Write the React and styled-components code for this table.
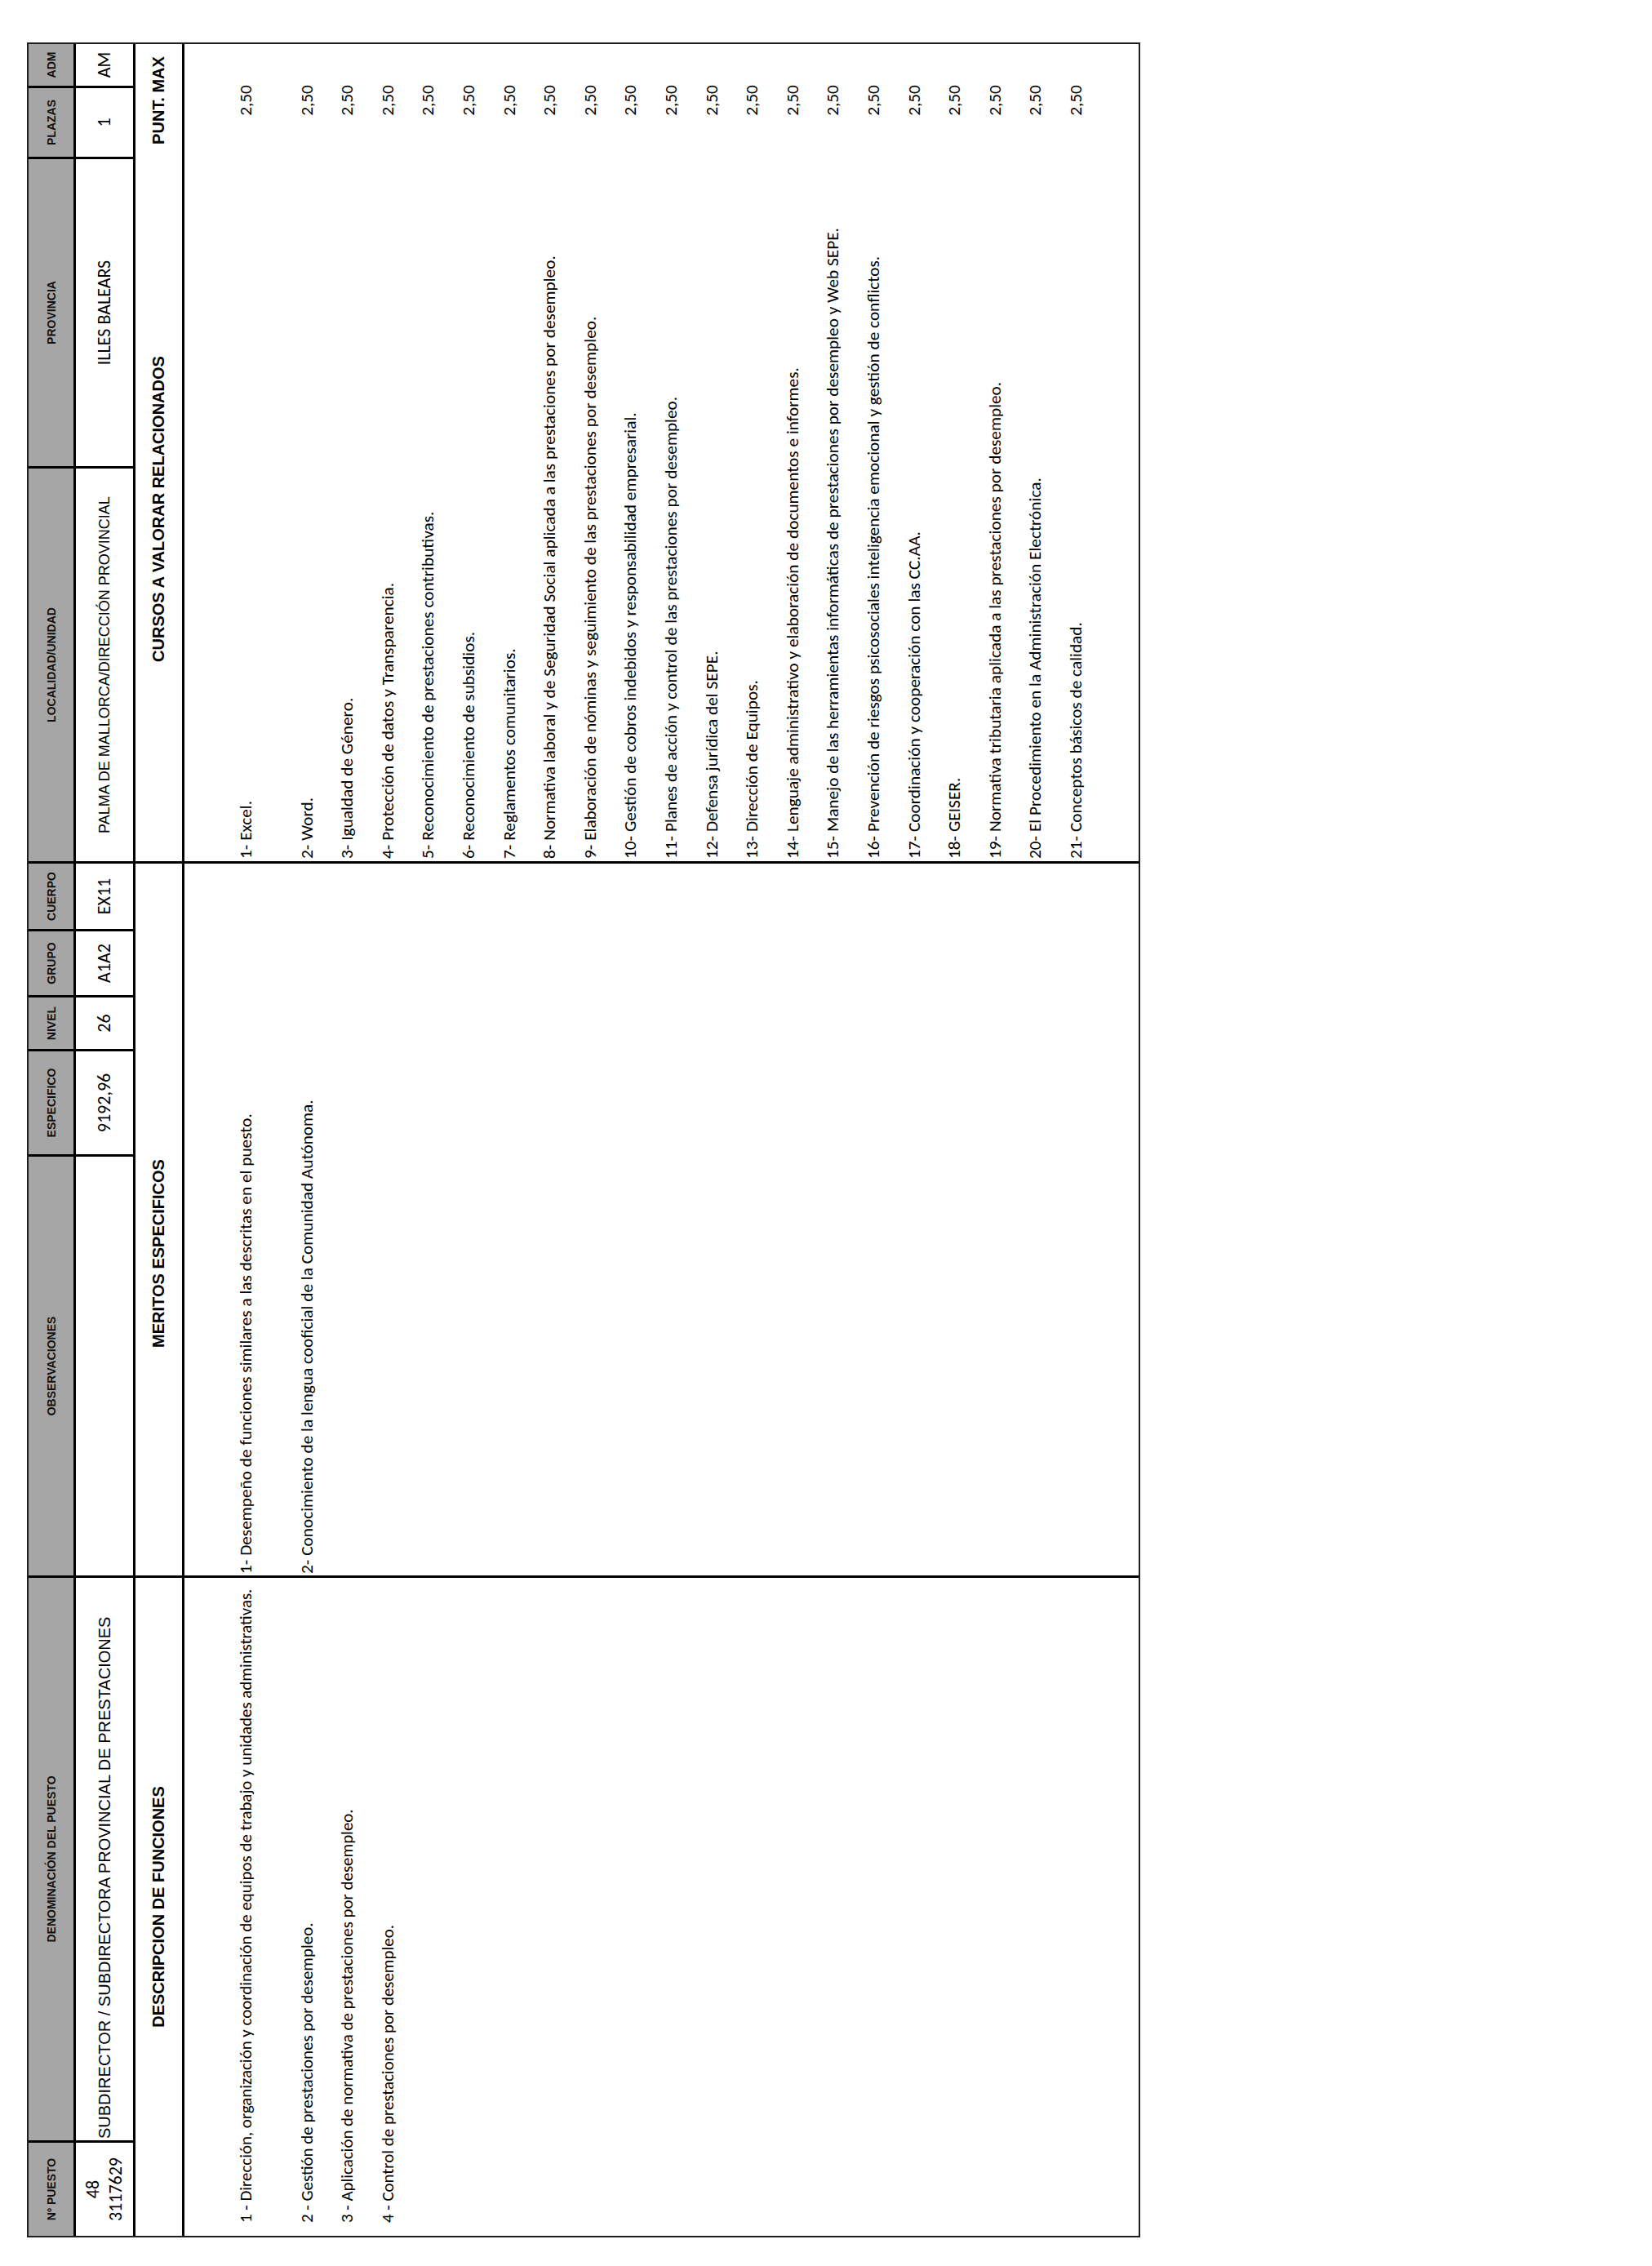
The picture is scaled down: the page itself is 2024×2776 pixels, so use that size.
import React from 'react'
import styled, { createGlobalStyle } from 'styled-components'

// sheet is laid out landscape, then turned a quarter to the left
const SHEET_W = 2689
const SHEET_H = 1364

const ARIAL = `'Liberation Sans', Arial, sans-serif`
const BODY = `'Carlito', Calibri, 'Lato', 'Liberation Sans', sans-serif`

const GlobalStyle = createGlobalStyle`
  html, body {
    margin: 0;
    padding: 0;
    background: #fff;
  }
  body {
    font-family: ${ARIAL};
    color: #000;
  }
`

const Page = styled.div`
  width: 2024px;
  height: 2776px;
  padding: 52px 0 0 33px;
  box-sizing: border-box;
  overflow: hidden;
`

const Frame = styled.div`
  width: ${SHEET_H}px;
  height: ${SHEET_W}px;
`

const Sheet = styled.div`
  width: ${SHEET_W}px;
  height: ${SHEET_H}px;
  box-sizing: border-box;
  transform-origin: 0 0;
  transform: translateY(${SHEET_W}px) rotate(-90deg);
  display: grid;
  grid-template-columns: 114px 689px 513px 126px 63px 78px 80px 481px 376px 84px 51px;
  grid-template-rows: 55px 70px 57px 1fr;
  gap: 3px;
  background: #000;
  border: 2px solid #1e1e1e;
`

const HeadCell = styled.div`
  background: #a6a6a6;
  display: flex;
  align-items: center;
  justify-content: center;
  font-family: ${ARIAL};
  font-weight: 700;
  font-size: 14px;
  color: #111;
  white-space: nowrap;
`

const DataCell = styled.div`
  background: #fff;
  display: flex;
  flex-direction: column;
  align-items: ${({ $left }) => ($left ? 'flex-start' : 'center')};
  justify-content: center;
  padding-left: ${({ $left }) => ($left ? '2px' : '0')};
  font-family: ${({ $font }) => $font || BODY};
  font-size: ${({ $size }) => $size || 22}px;
  line-height: 28px;
  white-space: nowrap;
`

const SectionCell = styled.div`
  grid-column: ${({ $span }) => $span};
  background: #fff;
  display: grid;
  grid-template-columns: ${({ $split }) => ($split ? '1fr 138px' : '1fr')};
  align-items: center;
  justify-items: center;
  padding-right: ${({ $shift }) => $shift || 0}px;
  font-family: ${ARIAL};
  font-weight: 700;
  font-size: 20px;
  white-space: nowrap;
`

const ContentCell = styled.div`
  grid-column: ${({ $span }) => $span};
  background: #fff;
  padding: 51px 0 0 ${({ $indent }) => $indent}px;
  font-family: ${BODY};
  font-size: ${({ $size }) => $size}px;
`

const Item = styled.div`
  height: 49.6px;
  line-height: 49.6px;
  margin-bottom: ${({ $first }) => ($first ? 25 : 0)}px;
  white-space: nowrap;
`

const CourseRow = styled.div`
  display: grid;
  grid-template-columns: 1fr 138px;
  height: 49.6px;
  line-height: 49.6px;
  margin-bottom: ${({ $first }) => ($first ? 25 : 0)}px;
  white-space: nowrap;
`

const Points = styled.span`
  text-align: center;
`

const headers = [
  'Nº PUESTO',
  'DENOMINACIÓN DEL PUESTO',
  'OBSERVACIONES',
  'ESPECIFICO',
  'NIVEL',
  'GRUPO',
  'CUERPO',
  'LOCALIDAD/UNIDAD',
  'PROVINCIA',
  'PLAZAS',
  'ADM',
]

const funciones = [
  '1 - Dirección, organización y coordinación de equipos de trabajo y unidades administrativas.',
  '2 - Gestión de prestaciones por desempleo.',
  '3 - Aplicación de normativa de prestaciones por desempleo.',
  '4 - Control de prestaciones por desempleo.',
]

const meritos = [
  '1- Desempeño de funciones similares a las descritas en el puesto.',
  '2- Conocimiento de la lengua cooficial de la Comunidad Autónoma.',
]

const cursos = [
  '1- Excel.',
  '2- Word.',
  '3- Igualdad de Género.',
  '4- Protección de datos y Transparencia.',
  '5- Reconocimiento de prestaciones contributivas.',
  '6- Reconocimiento de subsidios.',
  '7- Reglamentos comunitarios.',
  '8- Normativa laboral y de Seguridad Social aplicada a las prestaciones por desempleo.',
  '9- Elaboración de nóminas y seguimiento de las prestaciones por desempleo.',
  '10- Gestión de cobros indebidos y responsabilidad empresarial.',
  '11- Planes de acción y control de las prestaciones por desempleo.',
  '12- Defensa jurídica del SEPE.',
  '13- Dirección de Equipos.',
  '14- Lenguaje administrativo y elaboración de documentos e informes.',
  '15- Manejo de las herramientas informáticas de prestaciones por desempleo y Web SEPE.',
  '16- Prevención de riesgos psicosociales inteligencia emocional y gestión de conflictos.',
  '17- Coordinación y cooperación con las CC.AA.',
  '18- GEISER.',
  '19- Normativa tributaria aplicada a las prestaciones por desempleo.',
  '20- El Procedimiento en la Administración Electrónica.',
  '21- Conceptos básicos de calidad.',
]

export default function App() {
  return (
    <Page>
      <GlobalStyle />
      <Frame>
        <Sheet>
          {headers.map(h => (
            <HeadCell key={h}>{h}</HeadCell>
          ))}

          <DataCell>
            <span>48</span>
            <span>3117629</span>
          </DataCell>
          <DataCell $left $font={ARIAL} $size={20}>
            SUBDIRECTOR / SUBDIRECTORA PROVINCIAL DE PRESTACIONES
          </DataCell>
          <DataCell />
          <DataCell>9192,96</DataCell>
          <DataCell>26</DataCell>
          <DataCell>A1A2</DataCell>
          <DataCell>EX11</DataCell>
          <DataCell $font={ARIAL} $size={18}>
            PALMA DE MALLORCA/DIRECCIÓN PROVINCIAL
          </DataCell>
          <DataCell>ILLES BALEARS</DataCell>
          <DataCell>1</DataCell>
          <DataCell>AM</DataCell>

          <SectionCell $span="1 / 3">DESCRIPCION DE FUNCIONES</SectionCell>
          <SectionCell $span="3 / 8" $shift={83}>
            MERITOS ESPECIFICOS
          </SectionCell>
          <SectionCell $span="8 / 12" $split>
            <span>CURSOS A VALORAR RELACIONADOS</span>
            <span>PUNT. MAX</span>
          </SectionCell>

          <ContentCell $span="1 / 3" $indent={16} $size={20.9}>
            {funciones.map((f, i) => (
              <Item key={f} $first={i === 0}>
                {f}
              </Item>
            ))}
          </ContentCell>
          <ContentCell $span="3 / 8" $indent={2} $size={21.3}>
            {meritos.map((m, i) => (
              <Item key={m} $first={i === 0}>
                {m}
              </Item>
            ))}
          </ContentCell>
          <ContentCell $span="8 / 12" $indent={3} $size={21.3}>
            {cursos.map((c, i) => (
              <CourseRow key={c} $first={i === 0}>
                <span>{c}</span>
                <Points>2,50</Points>
              </CourseRow>
            ))}
          </ContentCell>
        </Sheet>
      </Frame>
    </Page>
  )
}
